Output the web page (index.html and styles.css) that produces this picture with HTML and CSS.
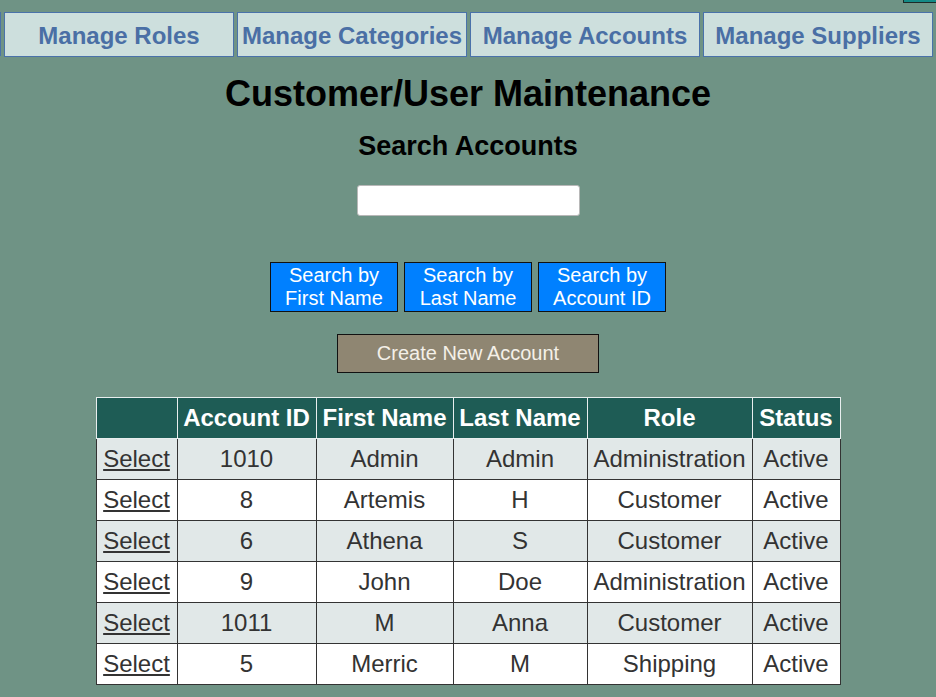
FILE: index.html
```html
<!DOCTYPE html>
<html>
<head>
<meta charset="utf-8">
<link rel="stylesheet" href="styles.css">
</head>
<body>
<div class="corner"></div>
<nav class="nav">
  <span class="nav-edge"></span>
  <a class="nav-btn">Manage Roles</a>
  <a class="nav-btn">Manage Categories</a>
  <a class="nav-btn">Manage Accounts</a>
  <a class="nav-btn">Manage Suppliers</a>
</nav>
<main class="main">
  <h1 class="title">Customer/User Maintenance</h1>
  <h2 class="subtitle">Search Accounts</h2>
  <input class="search" type="text">
  <div class="search-btns">
    <button class="sbtn">Search by<br>First Name</button>
    <button class="sbtn">Search by<br>Last Name</button>
    <button class="sbtn">Search by<br>Account ID</button>
  </div>
  <button class="create">Create New Account</button>
  <table class="grid">
    <colgroup>
      <col class="c1"><col class="c2"><col class="c3"><col class="c4"><col class="c5"><col class="c6">
    </colgroup>
    <thead>
      <tr><th></th><th>Account ID</th><th>First Name</th><th>Last Name</th><th>Role</th><th>Status</th></tr>
    </thead>
    <tbody>
      <tr><td><a class="sel">Select</a></td><td>1010</td><td>Admin</td><td>Admin</td><td>Administration</td><td>Active</td></tr>
      <tr><td><a class="sel">Select</a></td><td>8</td><td>Artemis</td><td>H</td><td>Customer</td><td>Active</td></tr>
      <tr><td><a class="sel">Select</a></td><td>6</td><td>Athena</td><td>S</td><td>Customer</td><td>Active</td></tr>
      <tr><td><a class="sel">Select</a></td><td>9</td><td>John</td><td>Doe</td><td>Administration</td><td>Active</td></tr>
      <tr><td><a class="sel">Select</a></td><td>1011</td><td>M</td><td>Anna</td><td>Customer</td><td>Active</td></tr>
      <tr><td><a class="sel">Select</a></td><td>5</td><td>Merric</td><td>M</td><td>Shipping</td><td>Active</td></tr>
    </tbody>
  </table>
</main>
</body>
</html>
```
FILE: styles.css
```css
html, body {
  margin: 0;
  padding: 0;
}
body {
  background: #6f9385;
  font-family: "Liberation Sans", Arial, sans-serif;
  position: relative;
  height: 697px;
  overflow: hidden;
}
.corner {
  position: absolute;
  top: -10px;
  left: 903px;
  width: 40px;
  height: 11px;
  background: #138a86;
  border: 1px solid #1c2a28;
}
.nav {
  display: flex;
  gap: 3px;
  padding-top: 12px;
}
.nav-edge {
  width: 0;
  height: 44px;
  border-right: 1px solid #4a72aa;
}
.nav-btn {
  box-sizing: border-box;
  width: 230px;
  height: 45px;
  padding-top: 2px;
  background: #cddfdd;
  border: 1px solid #4a72aa;
  color: #4a6fa5;
  font-weight: bold;
  font-size: 24px;
  display: flex;
  align-items: center;
  justify-content: center;
  white-space: nowrap;
}
.main {
  display: flex;
  flex-direction: column;
  align-items: center;
}
.title {
  margin: 16px 0 0;
  font-size: 36px;
  line-height: 42px;
  color: #000;
}
.subtitle {
  margin: 16px 0 0;
  font-size: 27px;
  line-height: 30px;
  color: #000;
}
.search {
  box-sizing: border-box;
  margin-top: 24px;
  width: 223px;
  height: 31px;
  background: #fff;
  border: 1px solid #b8b8b8;
  border-radius: 3px;
}
.search-btns {
  display: flex;
  gap: 6px;
  margin-top: 46px;
}
.sbtn {
  box-sizing: border-box;
  width: 128px;
  height: 50px;
  background: #0080ff;
  border: 1px solid #111;
  color: #fff;
  font-family: "Liberation Sans", Arial, sans-serif;
  font-size: 20px;
  line-height: 23px;
  padding: 0;
}
.create {
  box-sizing: border-box;
  margin-top: 22px;
  width: 262px;
  height: 39px;
  background: #8f8672;
  border: 1px solid #111;
  color: #f4f0e8;
  font-family: "Liberation Sans", Arial, sans-serif;
  font-size: 20px;
  padding: 0;
}
.grid {
  margin-top: 24px;
  border-collapse: collapse;
  font-size: 24px;
  color: #333;
  table-layout: fixed;
  width: 744px;
}
.c1 { width: 81px; }
.c2 { width: 139px; }
.c3 { width: 137px; }
.c4 { width: 134px; }
.c5 { width: 165px; }
.c6 { width: 88px; }
.grid th {
  background: #1e5c55;
  color: #fff;
  font-weight: bold;
  height: 40px;
  padding: 0;
  border: 1px solid #e8eeee;
  white-space: nowrap;
}
.grid td {
  height: 40px;
  padding: 0;
  text-align: center;
  border: 1px solid #333;
  white-space: nowrap;
}
.grid tbody tr:nth-child(odd) td { background: #e1e8e8; }
.grid tbody tr:nth-child(even) td { background: #fff; }
.sel {
  color: #333;
  text-decoration: underline;
}
```
